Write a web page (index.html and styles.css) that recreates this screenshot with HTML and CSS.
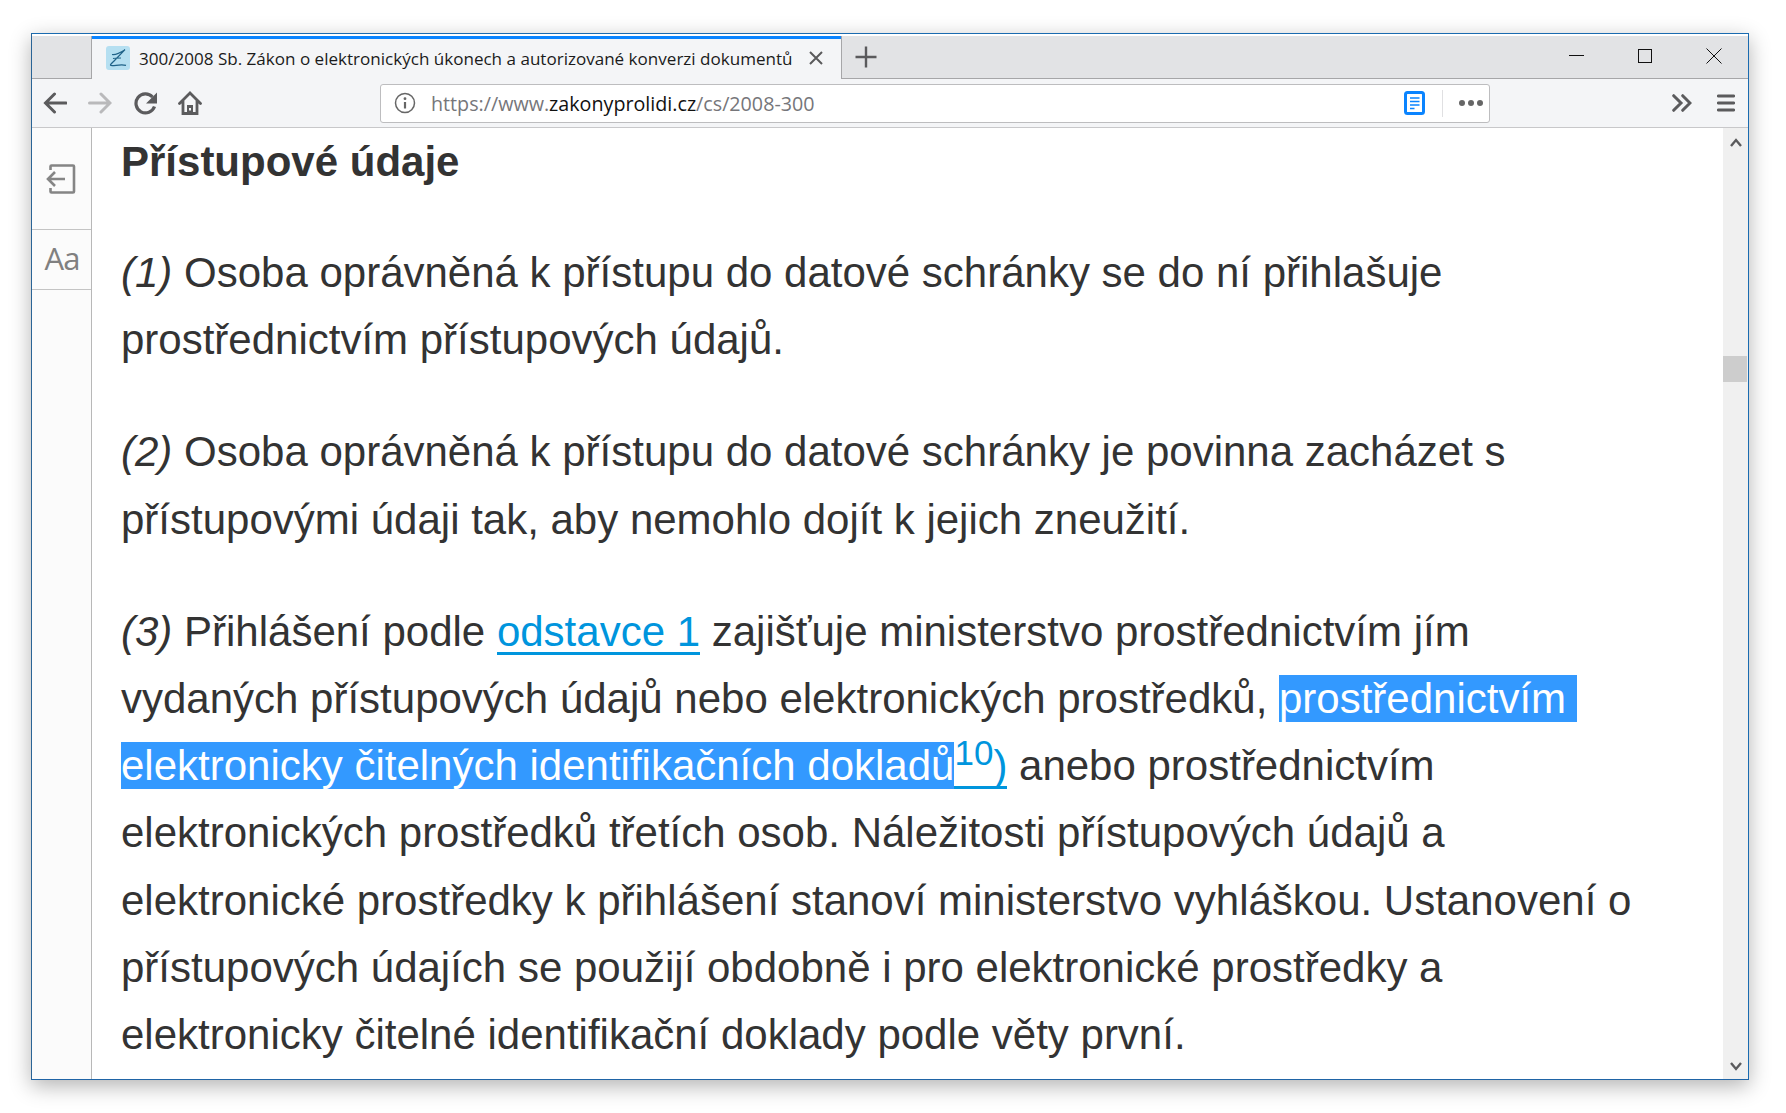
FILE: index.html
```html
<!DOCTYPE html>
<html lang="cs">
<head>
    <meta charset="UTF-8">
    <title>300/2008 Sb. Zákon o elektronických úkonech a autorizované konverzi dokumentů</title>
    <link rel="stylesheet" href="styles.css">
</head>
<body>
    <div class="window">
        <div class="tabbar">
            <div class="tab-gap"></div>
            <div class="tab">
                <svg class="favicon" width="24" height="24" viewBox="0 0 24 24">
                    <rect width="24" height="24" rx="3" fill="#b5dff1"/>
                    <path d="M6 8.500c3 .5 8-1.500 13-4.800L8.500 14.500c-3 3-5 4.500-3.500 5 3 .8 9-1.800 15-.2M7 12.500c2-.5 5-.5 8-.5" fill="none" stroke="#1f6288" stroke-width="1.200"/>
                </svg>
                <span class="tab-title">300/2008 Sb. Zákon o elektronických úkonech a autorizované konverzi dokumentů</span>
                <svg class="tab-close" width="14" height="14" viewBox="0 0 14 14">
                    <path d="M1 1l12 12M13 1L1 13" stroke="#5a5a5c" stroke-width="2" fill="none"/>
                </svg>
            </div>
            <div class="new-tab">
                <svg width="22" height="22" viewBox="0 0 22 22">
                    <path d="M11 .5v21M.5 11h21" stroke="#5a5a5c" stroke-width="2.400" fill="none"/>
                </svg>
            </div>
            <div class="win-controls">
                <svg width="16" height="16" viewBox="0 0 16 16"><path d="M0 7.500h15" stroke="#111" stroke-width="1" fill="none"/></svg>
                <svg width="16" height="16" viewBox="0 0 16 16"><rect x=".5" y="1.500" width="13" height="13" stroke="#111" fill="none"/></svg>
                <svg width="16" height="16" viewBox="0 0 16 16"><path d="M.5.500l15 15M15.500.500l-15 15" stroke="#111" fill="none"/></svg>
            </div>
        </div>

        <div class="toolbar">
            <div class="nav-buttons">
                <svg width="24" height="22" viewBox="0 0 24 22"><path d="M23 11H3M11.500 2L2.500 11l9 9" stroke="#5b5b5d" stroke-width="3" stroke-linecap="round" fill="none"/></svg>
                <svg width="24" height="22" viewBox="-.5 0 24 22"><path d="M1 11h20M12.500 2l9 9-9 9" stroke="#b9b9bb" stroke-width="3" stroke-linecap="round" fill="none"/></svg>
                <svg width="24" height="24" viewBox="-1 0 24 24"><path d="M20.500 15.500A9.500 9.500 0 1 1 18.500 6" stroke="#5b5b5d" stroke-width="3.200" fill="none"/><path d="M23 1.500v11H12z" fill="#5b5b5d"/></svg>
                <svg width="24" height="24" viewBox="0 0 24 24">
                    <path d="M1.500 12.500L12 2l10.500 10.500M5 10v12.500h14V10" stroke="#5b5b5d" stroke-width="2.800" stroke-linecap="round" fill="none"/>
                    <rect x="9" y="14" width="6" height="8" fill="#5b5b5d"/>
                    <rect x="11" y="17" width="2" height="2.500" fill="#f4f5f7"/>
                </svg>
            </div>
            <div class="urlbar">
                <svg class="info-icon" width="22" height="22" viewBox="0 0 22 22">
                    <circle cx="11" cy="11" r="9.500" stroke="#666" stroke-width="1.500" fill="none"/>
                    <path d="M11 10v6.500" stroke="#666" stroke-width="2.200"/>
                    <circle cx="11" cy="6.700" r="1.400" fill="#666"/>
                </svg>
                <div class="url"><span class="url-dim">https://www.</span>zakonyprolidi.cz<span class="url-dim">/cs/2008-300</span></div>
                <svg class="reader-icon" width="21" height="24" viewBox="0 0 21 24">
                    <rect x="1.500" y="1.500" width="18" height="21" rx="2" fill="#fff" stroke="#0a84ff" stroke-width="3"/>
                    <path d="M6 7h9.500M6 10.500h9.500M6 14h9.500M6 17.500h4.500" stroke="#0a84ff" stroke-width="1.600"/>
                </svg>
                <div class="url-sep"></div>
                <svg class="dots-icon" width="24" height="6" viewBox="0 0 24 6">
                    <circle cx="3" cy="3" r="3" fill="#666"/><circle cx="12" cy="3" r="3" fill="#666"/><circle cx="21" cy="3" r="3" fill="#666"/>
                </svg>
            </div>
            <div class="tool-right">
                <svg width="20" height="18" viewBox="0 0 20 18"><path d="M1.700 1.700L9 9l-7.300 7.300M10.700 1.700L18 9l-7.300 7.300" stroke="#5b5b5d" stroke-width="3" stroke-linecap="round" fill="none"/></svg>
                <svg width="18" height="18" viewBox="0 0 18 18"><path d="M1.200 2h15.600M1.200 9h15.600M1.200 16h15.600" stroke="#5b5b5d" stroke-width="2.800" stroke-linecap="round" fill="none"/></svg>
            </div>
        </div>

        <div class="content">
            <aside class="sidebar">
                <div class="side-btn side-back">
                    <svg width="30" height="30" viewBox="0 0 30 30">
                        <path d="M4.500 6V2.500a1 1 0 0 1 1-1H27a1 1 0 0 1 1 1v25a1 1 0 0 1-1 1H5.500a1 1 0 0 1-1-1V24" stroke="#858585" stroke-width="2.600" fill="none"/>
                        <path d="M19 15H2.500M9 8l-7 7 7 7" stroke="#858585" stroke-width="2.600" fill="none"/>
                    </svg>
                </div>
                <div class="side-btn side-font">Aa</div>
            </aside>
            <main class="article">
                <h2>Přístupové údaje</h2>
                <p><i>(1)</i> Osoba oprávněná k přístupu do datové schránky se do ní přihlašuje prostřednictvím přístupových údajů.</p>
                <p><i>(2)</i> Osoba oprávněná k přístupu do datové schránky je povinna zacházet s přístupovými údaji tak, aby nemohlo dojít k jejich zneužití.</p>
                <p><i>(3)</i> Přihlášení podle <a href="#">odstavce 1</a> zajišťuje ministerstvo prostřednictvím jím vydaných přístupových údajů nebo elektronických prostředků, <mark class="mark-end">prostřednictvím</mark> <mark>elektronicky čitelných identifikačních dokladů</mark><a href="#"><sup>10</sup>)</a> anebo prostřednictvím elektronických prostředků třetích osob. Náležitosti přístupových údajů a elektronické prostředky k přihlášení stanoví ministerstvo vyhláškou. Ustanovení o přístupových údajích se použijí obdobně i pro elektronické prostředky a elektronicky čitelné identifikační doklady podle věty první.</p>
            </main>
            <div class="scrollbar">
                <svg width="12" height="9" viewBox="0 0 12 9"><path d="M1 8l5-6 5 6" stroke="#5b5b5d" stroke-width="2.400" fill="none"/></svg>
                <div class="scroll-thumb"></div>
                <svg width="12" height="9" viewBox="0 0 12 9"><path d="M1 1l5 6 5-6" stroke="#5b5b5d" stroke-width="2.400" fill="none"/></svg>
            </div>
        </div>
    </div>
</body>
</html>
```

FILE: styles.css
```css
html, body {
    margin: 0;
    height: 100%;
    background: #fff;
    overflow: hidden;
}
body {
    padding: 33px 37px 33px 31px;
    box-sizing: border-box;
}
svg {
    display: block;
    flex: none;
}
.window {
    height: 1047px;
    display: flex;
    flex-direction: column;
    border: 1px solid #1a6bb0;
    border-left-color: #2a6496;
    border-bottom-color: #1f64a6;
    box-shadow: 0 6px 20px rgba(0, 0, 0, .3);
    background: #fff;
    box-sizing: border-box;
}

/* tabs */
.tabbar {
    height: 45px;
    flex: none;
    display: flex;
    padding-top: 2px;
    background: #fff;
    box-sizing: border-box;
}
.tab-gap {
    width: 59px;
    background: #e2e3e5;
    border-bottom: 1px solid #a6a6a8;
    border-right: 1px solid #a6a6a8;
}
.tab {
    width: 749px;
    display: flex;
    align-items: center;
    padding: 0 18px 2px 14px;
    box-sizing: border-box;
    background: #f4f5f7;
    border-top: 3px solid #0a84ff;
}
.favicon {
    margin-right: 9px;
}
.tab-title {
    flex: 1;
    font-family: "Open Sans", sans-serif;
    font-size: 17.060px;
    color: #1b1b1b;
    white-space: nowrap;
    overflow: hidden;
}
.new-tab {
    width: 48px;
    display: flex;
    align-items: center;
    justify-content: center;
    background: #e2e3e5;
    border-left: 1px solid #a6a6a8;
    border-bottom: 1px solid #a6a6a8;
    box-sizing: border-box;
}
.win-controls {
    flex: 1;
    display: flex;
    justify-content: flex-end;
    align-items: center;
    gap: 52.500px;
    padding: 0 26px 2px 0;
    background: #e2e3e5;
    border-bottom: 1px solid #a6a6a8;
}

/* toolbar */
.toolbar {
    height: 49px;
    flex: none;
    display: flex;
    align-items: center;
    background: #f4f5f7;
    border-bottom: 1px solid #c8c8ca;
    box-sizing: border-box;
}
.nav-buttons {
    width: 348px;
    display: flex;
    align-items: center;
    gap: 21px;
    padding-left: 11px;
    box-sizing: border-box;
}
.urlbar {
    width: 1110px;
    height: 39px;
    display: flex;
    align-items: center;
    background: #fff;
    border: 1px solid #bdbdbf;
    border-radius: 3px;
    box-sizing: border-box;
    padding: 0 6px 0 13px;
}
.url {
    flex: 1;
    margin-left: 15px;
    padding-top: 1px;
    font-family: "Open Sans", sans-serif;
    font-size: 19.700px;
    color: #111;
    white-space: nowrap;
}
.url-dim {
    color: #76767a;
}
.reader-icon {
    margin-right: 17px;
}
.url-sep {
    width: 1px;
    height: 27px;
    background: #e0e0e2;
    margin-right: 16px;
}
.tool-right {
    flex: 1;
    display: flex;
    align-items: center;
    justify-content: flex-end;
    gap: 25px;
    padding-right: 13px;
}

/* page */
.content {
    flex: 1;
    display: flex;
    min-height: 0;
}
.sidebar {
    width: 60px;
    flex: none;
    background: #fbfbfb;
    border-right: 1px solid #b8b8b8;
    box-sizing: border-box;
}
.side-btn {
    display: flex;
    align-items: center;
    justify-content: center;
    border-bottom: 1px solid #c4c4c4;
    box-sizing: border-box;
}
.side-back {
    height: 102px;
    padding-right: 1px;
}
.side-font {
    height: 60px;
    padding: 0 0 3px 1px;
    font-family: "Open Sans", sans-serif;
    font-size: 31px;
    letter-spacing: -1px;
    color: #808080;
}
.article {
    flex: 1;
    min-width: 0;
    padding: 0 90px 0 29px;
    overflow: hidden;
    font-family: "Liberation Sans", Arial, sans-serif;
    color: #333;
}
.article h2 {
    margin: 10px 0 53px;
    font-size: 42px;
    line-height: 48px;
}
.article p {
    margin: 45px 0 0;
    font-size: 42px;
    line-height: 67.200px;
}
.article a {
    color: #0095dd;
    text-decoration: none;
    background: linear-gradient(#0095dd, #0095dd) 0 100% / 100% 3px no-repeat;
}
.article mark {
    background: #3399ff;
    color: #fff;
}
.article .mark-end {
    padding-right: 11px;
}
.article sup {
    font-size: 35px;
    line-height: 0;
}
.scrollbar {
    width: 25px;
    flex: none;
    position: relative;
    display: flex;
    flex-direction: column;
    justify-content: space-between;
    align-items: center;
    padding: 10px 0 8px;
    background: #f0f0f0;
    box-sizing: border-box;
}
.scroll-thumb {
    position: absolute;
    top: 228px;
    left: 0;
    right: 1px;
    height: 26px;
    background: #cdcdcd;
}
```
